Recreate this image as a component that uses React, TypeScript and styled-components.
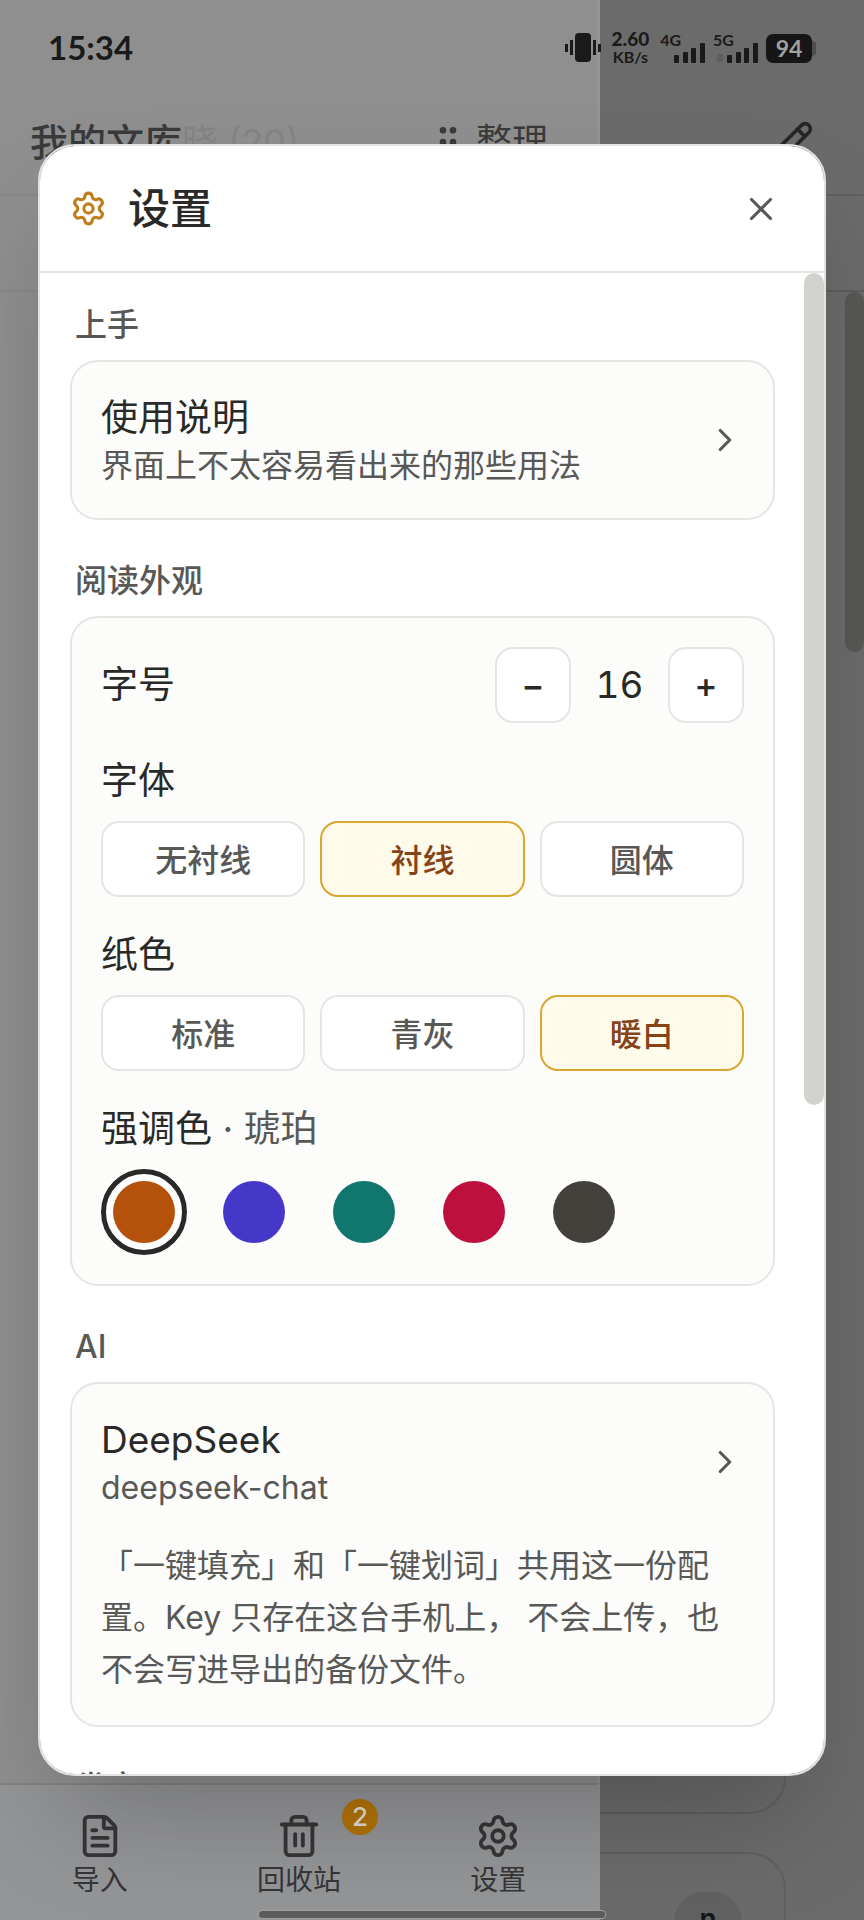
import React, { useState } from 'react';
import styled, { createGlobalStyle } from 'styled-components';
import { ChevronRight, FileText, GripVertical, Pencil, Settings, Trash2, X } from 'lucide-react';

const GlobalStyle = createGlobalStyle`
  * { box-sizing: border-box; }
  html, body, #root { height: 100%; }
  body {
    margin: 0;
    overflow: hidden;
    background: #6b6b6b;
    color: #292927;
    font-family: Inter, "Noto Sans CJK SC", sans-serif;
  }
  button { font: inherit; color: inherit; margin: 0; padding: 0; border: 0; background: none; cursor: pointer; }
  h1, h2, p { margin: 0; font-weight: 400; }
  svg { display: block; flex: none; }
`;

/* ---------- library page behind the drawer ---------- */

const Screen = styled.div`
  position: relative;
  height: 100%;
  overflow: hidden;
`;

const Page = styled.main`
  display: flex;
  flex-direction: column;
  height: 100%;
  background: #6b6b6b;
`;

const PageHeader = styled.header`
  display: flex;
  flex: none;
  justify-content: flex-end;
  height: 196px;
  padding: 120px 50px 0 0;
  border-bottom: 2px solid #5f5f5f;
  color: #262626;
`;

const PageToolbar = styled.div`
  flex: none;
  height: 96px;
  border-bottom: 2px solid #5d5d5d;
`;

const PageBody = styled.div`
  display: flex;
  flex: 1;
  min-height: 0;
`;

const Shelf = styled.div`
  display: flex;
  flex: 1;
  flex-direction: column;
  gap: 38px;
  padding: 38px 59px 0;
`;

const ShelfCard = styled.div<{ $cut?: boolean }>`
  display: flex;
  justify-content: flex-end;
  flex: ${(p) => (p.$cut ? '0 0 68px' : '1')};
  padding: 38px 42px 0 0;
  border: 2px solid #60605f;
  border-radius: ${(p) => (p.$cut ? '37px 37px 0 0' : '37px')};
  border-bottom-width: ${(p) => (p.$cut ? '0' : '2px')};
  overflow: hidden;
`;

const WordChip = styled.span`
  display: flex;
  flex: none;
  justify-content: center;
  width: 68px;
  height: 68px;
  padding-top: 10px;
  border-radius: 30px;
  background: #616161;
  color: #151515;
  font-size: 28px;
  font-weight: 600;
  line-height: 34px;
`;

const PageThumb = styled.div`
  width: 19px;
  height: 360px;
  border-radius: 10px;
  background: #585856;
`;

/* ---------- drawer ---------- */

const Drawer = styled.aside`
  position: absolute;
  top: 0;
  bottom: 0;
  left: 0;
  display: flex;
  flex-direction: column;
  width: 600px;
  background: #8f8f8f;
  border-right: 2px solid #969696;
`;

const DrawerHeader = styled.header`
  display: flex;
  flex: none;
  align-items: flex-start;
  height: 196px;
  padding: 114px 50px 0 30px;
  border-bottom: 2px solid #888888;
  color: #3a3a3a;
  line-height: 56px;
`;

const DrawerTitle = styled.h1`
  font-size: 38px;
  font-weight: 500;
`;

const GhostTitle = styled.span`
  flex: 1;
  color: #848484;
  font-size: 36px;
`;

const SortButton = styled.button`
  display: flex;
  align-items: center;
  gap: 8px;
  font-size: 36px;
  line-height: 56px;
`;

const DrawerToolbar = styled.div`
  flex: none;
  height: 96px;
  border-bottom: 2px solid #888888;
`;

const DrawerBody = styled.div`
  flex: 1;
`;

const DrawerNav = styled.nav`
  display: grid;
  grid-template-columns: repeat(3, 1fr);
  flex: none;
  height: 137px;
  padding-top: 28px;
  border-top: 2px solid #838383;
  background: #949597;
  color: #363638;
`;

const NavButton = styled.button`
  position: relative;
  display: flex;
  flex-direction: column;
  align-items: center;
  align-self: start;
  font-size: 28px;
  line-height: 42px;
`;

const Badge = styled.span`
  position: absolute;
  top: -14px;
  left: 50%;
  width: 36px;
  height: 36px;
  margin-left: 43px;
  border-radius: 50%;
  background: #b37407;
  color: #e4dfd6;
  font-size: 26px;
  font-weight: 500;
  line-height: 36px;
`;

const HomeIndicator = styled.div`
  position: absolute;
  bottom: 2px;
  left: 30%;
  right: 30%;
  height: 7px;
  border-radius: 4px;
  background: #5c5c5e;
  box-shadow: 0 0 0 1px #a0a0a0;
`;

/* ---------- status bar ---------- */

const StatusBar = styled.div`
  position: absolute;
  top: 0;
  left: 0;
  right: 0;
  display: flex;
  align-items: center;
  height: 96px;
  padding: 0 48px;
  color: #1a1a1a;
  font-family: Lato, sans-serif;
  font-weight: 700;
`;

const Clock = styled.span`
  flex: 1;
  font-size: 33px;
  line-height: 40px;
  padding-bottom: 2px;
`;

const StatusIcons = styled.div`
  display: flex;
  align-items: center;
  gap: 7px;
`;

const NetSpeed = styled.span`
  display: flex;
  flex-direction: column;
  align-items: center;
  margin: 0 4px;
  font-size: 19px;
  font-weight: 900;
  line-height: 18px;
  small { font-size: 16px; font-weight: 700; }
`;

const Signal = styled.span<{ $overlap: number }>`
  display: flex;
  align-items: flex-start;
  height: 30px;
  font-size: 16px;
  line-height: 14px;
  svg { align-self: flex-end; margin-left: -${(p) => p.$overlap}px; }
`;

const Battery = styled.span`
  display: flex;
  align-items: center;
  width: 50px;
  span {
    flex: 1;
    height: 29px;
    border-radius: 7px;
    background: #161616;
    color: #a0a0a0;
    font-size: 23px;
    line-height: 29px;
    text-align: center;
  }
  i {
    width: 4px;
    height: 15px;
    border-radius: 0 4px 4px 0;
    background: #4d4d4d;
  }
`;

/* ---------- settings dialog ---------- */

const Overlay = styled.div`
  position: absolute;
  inset: 0;
  display: flex;
  align-items: center;
  justify-content: center;
  padding: 0 38px;
`;

const Dialog = styled.section`
  display: flex;
  flex-direction: column;
  width: 100%;
  height: 85%;
  border: 2px solid #e2e2e1;
  border-radius: 37px;
  background: #ffffff;
  background-clip: padding-box;
  box-shadow: 0 58px 115px -28px rgba(0, 0, 0, 0.25);
  overflow: hidden;
`;

const DialogHeader = styled.header`
  display: flex;
  flex: none;
  align-items: center;
  gap: 21px;
  height: 127px;
  padding: 0 25px 0 30px;
  border-bottom: 2px solid #e5e5e4;
  color: #bf7d1c;
`;

const DialogTitle = styled.h2`
  flex: 1;
  color: #292927;
  font-size: 42px;
  font-weight: 500;
  line-height: 60px;
`;

const CloseButton = styled.button`
  display: flex;
  align-items: center;
  justify-content: center;
  width: 76px;
  height: 76px;
  color: #585856;
`;

const DialogBody = styled.div`
  display: flex;
  flex: 1;
  min-height: 0;
  overflow: hidden;
`;

const Sections = styled.div`
  display: flex;
  flex: 1;
  flex-direction: column;
  gap: 38px;
  min-width: 0;
  padding: 29px 29px 0 30px;
`;

const Thumb = styled.div`
  width: 20px;
  height: 832px;
  border-radius: 10px;
  background: #d3d2ce;
`;

const SectionLabel = styled.h2`
  margin-bottom: 12px;
  padding-left: 5px;
  color: #585856;
  font-size: 32px;
  font-weight: 500;
  line-height: 46px;
`;

const Card = styled.div`
  padding: 29px;
  border: 2px solid #e5e5e4;
  border-radius: 28px;
  background: #fcfcfb;
`;

const LinkRow = styled.button`
  display: flex;
  align-items: center;
  justify-content: space-between;
  width: 100%;
  color: #585856;
  text-align: left;
`;

const RowText = styled.span`
  display: flex;
  flex-direction: column;
  padding-top: 2px;
`;

const RowTitle = styled.span`
  color: #292927;
  font-size: 37px;
  line-height: 50px;
`;

const RowDetail = styled.span`
  font-size: 32px;
  line-height: 46px;
`;

const Note = styled.p`
  margin-top: 29px;
  padding-right: 8px;
  color: #585856;
  font-size: 32px;
  line-height: 52px;
`;

const FieldRow = styled.div`
  display: flex;
  align-items: center;
  justify-content: space-between;
`;

const FieldLabel = styled.p`
  font-size: 37px;
  line-height: 52px;
  span { color: #585856; }
`;

const Field = styled.div`
  display: flex;
  flex-direction: column;
  gap: 14px;
  margin-top: 32px;
`;

const Stepper = styled.div`
  display: flex;
  align-items: center;
`;

const StepButton = styled.button`
  width: 76px;
  height: 76px;
  border: 2px solid #e5e5e4;
  border-radius: 18px;
  background: #ffffff;
  font-size: 35px;
  font-weight: 500;
`;

const StepValue = styled.output`
  width: 97px;
  font-size: 37px;
  font-variant-numeric: tabular-nums;
  line-height: 52px;
  text-align: center;
`;

const Options = styled.div`
  display: grid;
  grid-template-columns: repeat(3, 1fr);
  gap: 15px;
`;

const Option = styled.button<{ $on: boolean }>`
  height: 76px;
  padding-bottom: 3px;
  border: 2px solid ${(p) => (p.$on ? '#dba630' : '#e5e5e4')};
  border-radius: 18px;
  background: ${(p) => (p.$on ? '#fffbeb' : '#ffffff')};
  color: ${(p) => (p.$on ? '#854319' : '#585856')};
  font-size: 32px;
  font-weight: 500;
`;

const Swatches = styled.div`
  display: flex;
  gap: 24px;
`;

const Swatch = styled.button<{ $color: string; $on: boolean }>`
  width: 86px;
  height: 86px;
  border: 5px solid ${(p) => (p.$on ? '#292927' : 'transparent')};
  border-radius: 50%;
  padding: 7px;
  background: ${(p) => (p.$on ? '#ffffff' : 'transparent')};
  &::before {
    content: '';
    display: block;
    height: 62px;
    border-radius: 50%;
    background: ${(p) => p.$color};
  }
`;

const ACCENTS = [
  { name: '琥珀', color: '#b4520b' },
  { name: '靛蓝', color: '#4538c9' },
  { name: '青绿', color: '#10766e' },
  { name: '玫红', color: '#bd103c' },
  { name: '石墨', color: '#44403c' },
];

const Bars = ({ x = 0 }: { x?: number }) => (
  <svg width={33 + x} height="20" viewBox={`${-x} 0 ${33 + x} 20`} fill="currentColor">
    {x > 0 && <rect x={-x} y="11" width="6" height="8" rx="2" fill="#5e5e5e" />}
    <rect x="1" y="12" width="5" height="8" rx="1" />
    <rect x="10" y="9" width="5" height="11" rx="1" />
    <rect x="18" y="5" width="5" height="15" rx="1" />
    <rect x="27" y="0" width="5" height="20" rx="1" />
  </svg>
);

const Vibrate = () => (
  <svg width="36" height="30" viewBox="0 0 36 30" fill="currentColor">
    <rect x="10" y="0" width="16" height="29" rx="4" />
    <rect x="0" y="11" width="3" height="8" />
    <rect x="5" y="7" width="3" height="15" />
    <rect x="28" y="7" width="3" height="15" />
    <rect x="33" y="11" width="3" height="8" />
  </svg>
);

function OptionGroup({ label, items, initial }: { label: string; items: string[]; initial: string }) {
  const [value, setValue] = useState(initial);
  return (
    <Field role="group" aria-label={label}>
      <FieldLabel>{label}</FieldLabel>
      <Options>
        {items.map((item) => (
          <Option key={item} type="button" $on={item === value} aria-pressed={item === value} onClick={() => setValue(item)}>
            {item}
          </Option>
        ))}
      </Options>
    </Field>
  );
}

export default function App() {
  const [size, setSize] = useState(16);
  const [accent, setAccent] = useState('琥珀');

  return (
    <>
      <GlobalStyle />
      <Screen>
        <Page>
          <PageHeader>
            <Pencil size={44} />
          </PageHeader>
          <PageToolbar />
          <PageBody>
            <Shelf>
              <ShelfCard />
              <ShelfCard $cut>
                <WordChip>n</WordChip>
              </ShelfCard>
            </Shelf>
            <PageThumb />
          </PageBody>
        </Page>

        <Drawer>
          <DrawerHeader>
            <DrawerTitle>我的文库</DrawerTitle>
            <GhostTitle>晓 (20)</GhostTitle>
            <SortButton type="button">
              <GripVertical size={40} />
              整理
            </SortButton>
          </DrawerHeader>
          <DrawerToolbar />
          <DrawerBody />
          <DrawerNav>
            <NavButton type="button">
              <FileText size={46} />
              导入
            </NavButton>
            <NavButton type="button">
              <Trash2 size={46} />
              回收站
              <Badge>2</Badge>
            </NavButton>
            <NavButton type="button">
              <Settings size={46} />
              设置
            </NavButton>
          </DrawerNav>
        </Drawer>

        <HomeIndicator />

        <StatusBar>
          <Clock>15:34</Clock>
          <StatusIcons>
            <Vibrate />
            <NetSpeed>
              2.60
              <small>KB/s</small>
            </NetSpeed>
            <Signal $overlap={8}>
              4G
              <Bars />
            </Signal>
            <Signal $overlap={17}>
              5G
              <Bars x={9} />
            </Signal>
            <Battery>
              <span>94</span>
              <i />
            </Battery>
          </StatusIcons>
        </StatusBar>

        <Overlay>
          <Dialog role="dialog" aria-labelledby="settings-title">
            <DialogHeader>
              <Settings size={37} />
              <DialogTitle id="settings-title">设置</DialogTitle>
              <CloseButton type="button" aria-label="关闭">
                <X size={38} />
              </CloseButton>
            </DialogHeader>
            <DialogBody>
              <Sections>
                <section>
                  <SectionLabel>上手</SectionLabel>
                  <Card>
                    <LinkRow type="button">
                      <RowText>
                        <RowTitle>使用说明</RowTitle>
                        <RowDetail>界面上不太容易看出来的那些用法</RowDetail>
                      </RowText>
                      <ChevronRight size={38} />
                    </LinkRow>
                  </Card>
                </section>

                <section>
                  <SectionLabel>阅读外观</SectionLabel>
                  <Card>
                    <FieldRow>
                      <FieldLabel>字号</FieldLabel>
                      <Stepper>
                        <StepButton type="button" onClick={() => setSize(size - 1)}>−</StepButton>
                        <StepValue>{size}</StepValue>
                        <StepButton type="button" onClick={() => setSize(size + 1)}>+</StepButton>
                      </Stepper>
                    </FieldRow>
                    <OptionGroup label="字体" items={['无衬线', '衬线', '圆体']} initial="衬线" />
                    <OptionGroup label="纸色" items={['标准', '青灰', '暖白']} initial="暖白" />
                    <Field>
                      <FieldLabel>
                        强调色 <span>· {accent}</span>
                      </FieldLabel>
                      <Swatches>
                        {ACCENTS.map((a) => (
                          <Swatch
                            key={a.name}
                            type="button"
                            aria-label={a.name}
                            aria-pressed={a.name === accent}
                            $color={a.color}
                            $on={a.name === accent}
                            onClick={() => setAccent(a.name)}
                          />
                        ))}
                      </Swatches>
                    </Field>
                  </Card>
                </section>

                <section>
                  <SectionLabel>AI</SectionLabel>
                  <Card>
                    <LinkRow type="button">
                      <RowText>
                        <RowTitle>DeepSeek</RowTitle>
                        <RowDetail>deepseek-chat</RowDetail>
                      </RowText>
                      <ChevronRight size={38} />
                    </LinkRow>
                    <Note>「一键填充」和「一键划词」共用这一份配置。Key 只存在这台手机上， 不会上传，也不会写进导出的备份文件。</Note>
                  </Card>
                </section>

                <section>
                  <SectionLabel>发音</SectionLabel>
                </section>
              </Sections>
              <Thumb />
            </DialogBody>
          </Dialog>
        </Overlay>
      </Screen>
    </>
  );
}
